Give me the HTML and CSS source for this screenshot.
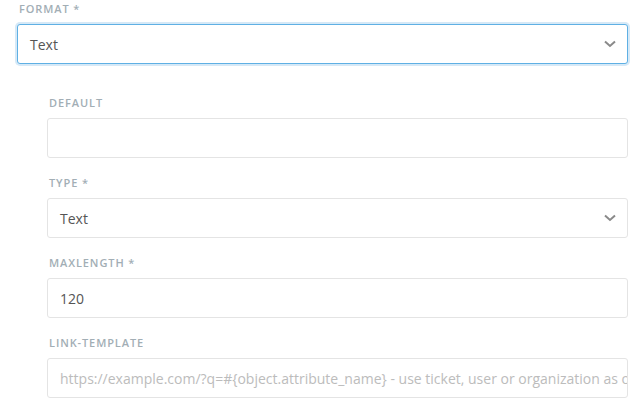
FILE: index.html
```html
<!DOCTYPE html>
<html>
<head>
<meta charset="utf-8">
<link rel="stylesheet" href="styles.css">
</head>
<body>
<div class="form">
  <div class="group">
    <div class="label">Format *</div>
    <div class="control select focused">
      <span class="value">Text</span>
      <svg class="chevron" width="12" height="8" viewBox="0 0 12 8"><path d="M1 1.5 L6 6 L11 1.5" fill="none" stroke="#8a8a8a" stroke-width="2"/></svg>
    </div>
  </div>
  <div class="nested">
    <div class="group">
      <div class="label">Default</div>
      <div class="control"></div>
    </div>
    <div class="group">
      <div class="label">Type *</div>
      <div class="control select">
        <span class="value">Text</span>
        <svg class="chevron" width="12" height="8" viewBox="0 0 12 8"><path d="M1 1.5 L6 6 L11 1.5" fill="none" stroke="#8a8a8a" stroke-width="2"/></svg>
      </div>
    </div>
    <div class="group">
      <div class="label">Maxlength *</div>
      <div class="control"><span class="value">120</span></div>
    </div>
    <div class="group">
      <div class="label">Link-Template</div>
      <div class="control"><span class="placeholder">https://example.com/?q=#{object.attribute_name} - use ticket, user or organization as object</span></div>
    </div>
  </div>
</div>
</body>
</html>
```

FILE: styles.css
```css
html, body {
  margin: 0;
  padding: 0;
  background: #fff;
}
body {
  font-family: "Open Sans", "Noto Sans", sans-serif;
  width: 644px;
  height: 411px;
  overflow: hidden;
}
.form {
  padding: 1px 16px 0 17px;
}
.label {
  font-size: 11px;
  font-weight: 600;
  line-height: 16px;
  height: 16px;
  letter-spacing: 0.9px;
  text-transform: uppercase;
  color: #a2aeb5;
  margin: 0 0 7px 2px;
  white-space: nowrap;
}
.control {
  box-sizing: border-box;
  height: 40px;
  border: 1px solid #e4e4e4;
  border-radius: 3px;
  background: #fff;
  display: flex;
  align-items: center;
  padding: 0 12px;
  overflow: hidden;
  font-size: 14px;
  color: #555;
}
.control.focused {
  border-color: #5fb0e4;
  box-shadow: 0 0 0 2px #d6e9f7;
}
.select {
  justify-content: space-between;
}
.value {
  white-space: nowrap;
}
.placeholder {
  white-space: nowrap;
  color: #bcbcbc;
}
.chevron {
  flex: none;
  margin-right: -1px;
}
.nested {
  padding: 31px 0 0 30px;
}
.nested .group {
  margin-bottom: 17px;
}
```
